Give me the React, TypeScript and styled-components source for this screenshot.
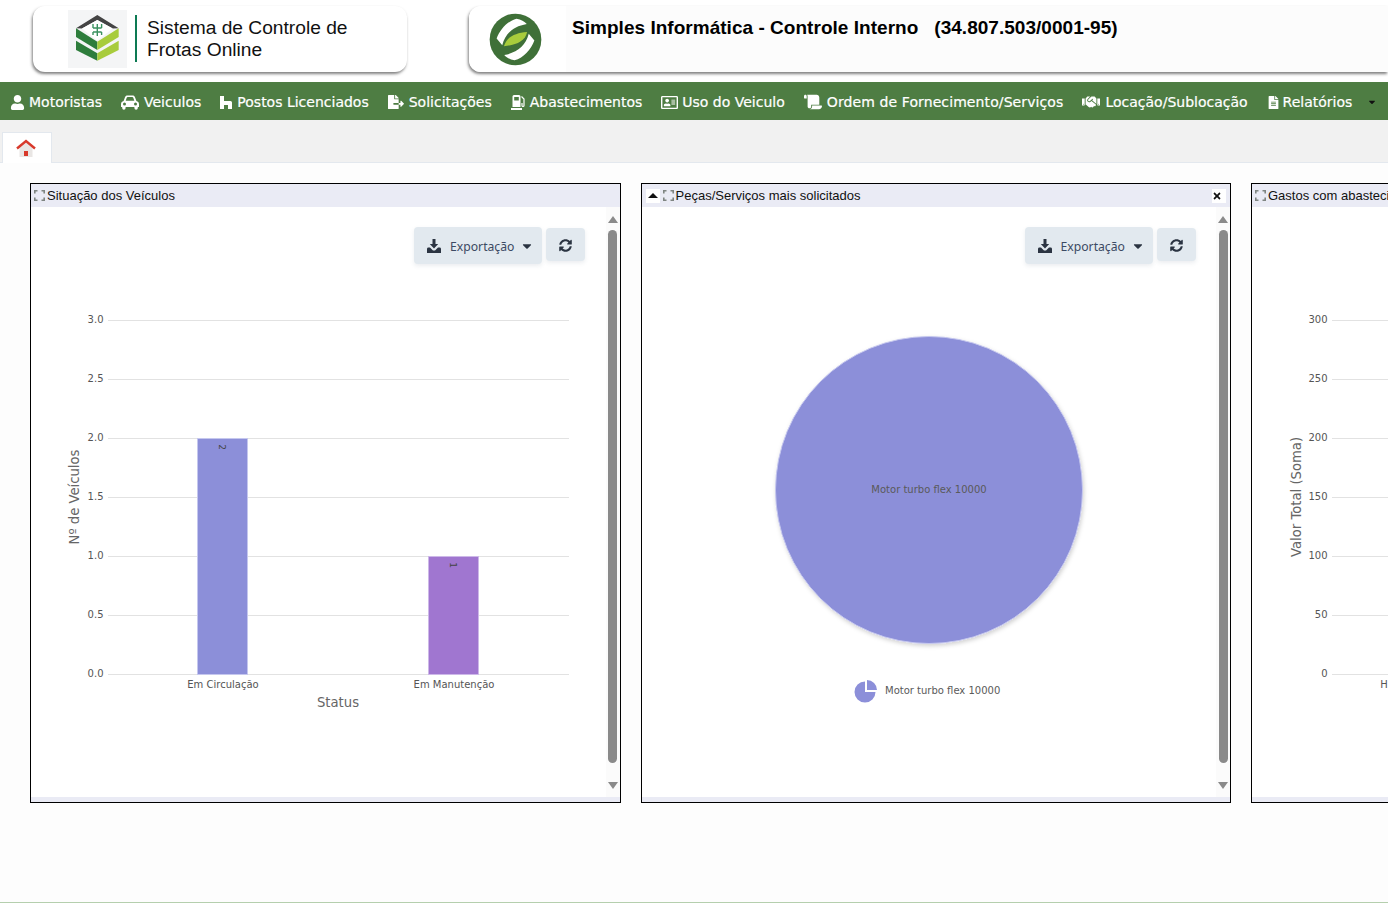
import React from 'react';
import styled, { createGlobalStyle } from 'styled-components';
import {
  FaCaretDown,
  FaFileAlt,
  FaFileExport,
  FaHandshake,
  FaRegAddressCard,
  FaScroll,
  FaSyncAlt,
  FaTimes,
  FaUser,
} from 'react-icons/fa';

const GlobalStyle = createGlobalStyle`
  html, body { margin: 0; padding: 0; background: #fff; }
  body { font-family: "Liberation Sans", Arial, sans-serif; overflow: hidden; }
`;

const Page = styled.div`
  width: 1388px;
  height: 903px;
  overflow: hidden;
  display: flex;
  flex-direction: column;
  background: #fdfdfd;
  border-bottom: 1px solid #b5cfae;
  box-sizing: border-box;
`;

const Header = styled.header`
  height: 82px;
  flex: none;
  display: flex;
  gap: 62px;
  padding: 6px 0 0 33px;
  box-sizing: border-box;
  background: #fff;
`;

const HeaderCard = styled.div<{ $wide?: boolean }>`
  height: 66px;
  flex: ${(p) => (p.$wide ? '1' : 'none')};
  width: ${(p) => (p.$wide ? 'auto' : '374px')};
  border-radius: ${(p) => (p.$wide ? '12px 0 0 12px' : '12px')};
  background: ${(p) => (p.$wide ? '#fcfcfc' : '#fff')};
  box-shadow: -1px 2px 3px rgba(60, 60, 60, 0.65);
  display: flex;
  align-items: flex-start;
  overflow: hidden;
`;

const BrandLogo = styled.svg`
  width: 59px;
  height: 58px;
  margin: 4px 8px 0 35px;
  flex: none;
`;

const Divider = styled.div`
  width: 2px;
  height: 47px;
  margin-top: 9px;
  background: #0d7a53;
  flex: none;
`;

const BrandText = styled.div`
  margin: 11px 0 0 10px;
  font-size: 19.2px;
  line-height: 22px;
  color: #111;
`;

const CompanyLogoBox = styled.div`
  width: 97px;
  height: 66px;
  padding-right: 5px;
  box-sizing: border-box;
  background: #fff;
  flex: none;
  display: flex;
  align-items: center;
  justify-content: center;
`;

const CompanyName = styled.div`
  margin: 10px 0 0 6px;
  font-size: 19px;
  line-height: 24px;
  font-weight: 700;
  letter-spacing: 0.03px;
  color: #000;
  white-space: pre;
`;

const Nav = styled.nav`
  height: 38px;
  flex: none;
  box-sizing: border-box;
  background: #4e7d43;
  display: flex;
  align-items: center;
  gap: 19px;
  padding: 2px 0 0 10px;
  color: #fff;
`;

const NavItem = styled.a<{ $track?: number }>`
  display: flex;
  align-items: center;
  font-family: "DejaVu Sans", Verdana, sans-serif;
  font-size: 14px;
  letter-spacing: ${(p) => p.$track ?? 0}px;
  -webkit-text-stroke: 0.2px #fff;
  white-space: nowrap;
  color: #fff;
`;

const NavIcon = styled.span<{ $slot: number }>`
  width: ${(p) => p.$slot}px;
  flex: none;
  display: flex;
  align-items: center;
  -webkit-text-stroke: 0;
`;

const NavCaret = styled(FaCaretDown)`
  font-size: 10px;
  margin-left: -4px;
  color: #111;
`;

const TabBar = styled.div`
  height: 43px;
  flex: none;
  background: #f1f1f1;
  border-bottom: 1px solid #e3e8ee;
  box-sizing: border-box;
  padding: 12px 0 0 2px;
  display: flex;
`;

const Tab = styled.div`
  width: 50px;
  height: 31px;
  box-sizing: border-box;
  background: #fff;
  border: 1px solid #e3e8ee;
  border-bottom: none;
  display: flex;
  align-items: flex-start;
  justify-content: center;
  padding: 5px 2px 0 0;
`;

const Board = styled.main`
  flex: 1;
  display: flex;
  gap: 20px;
  padding: 20px 0 0 30px;
`;

const Panel = styled.section`
  width: 590.5px;
  height: 620px;
  flex: none;
  box-sizing: border-box;
  border: 1px solid #000;
  background: #fff;
  display: flex;
  flex-direction: column;
`;

const PanelTitle = styled.div`
  height: 23px;
  flex: none;
  background: #eaebf5;
  display: flex;
  align-items: center;
  padding: 0 4px 0 3px;
  font-size: 13px;
  color: #111;
  white-space: nowrap;
  overflow: hidden;
`;

const TitleText = styled.span`
  margin-left: 2px;
  flex: 1;
`;

const TitleButton = styled.span<{ $left?: boolean }>`
  width: 14px;
  height: 14px;
  padding-left: ${(p) => (p.$left ? '2px' : '0')};
  box-sizing: border-box;
  background: #fff;
  display: flex;
  align-items: center;
  justify-content: flex-start;
  margin: ${(p) => (p.$left ? '0 3px 0 1px' : '0')};
  color: #111;
  flex: none;
`;

const UpCaret = styled.span`
  width: 0;
  height: 0;
  border-left: 5px solid transparent;
  border-right: 5px solid transparent;
  border-bottom: 5px solid #111;
`;

const PanelBody = styled.div`
  flex: 1;
  min-height: 0;
  display: flex;
`;

const PanelContent = styled.div`
  flex: 1;
  min-width: 0;
  display: flex;
  flex-direction: column;
`;

const PanelFoot = styled.div`
  height: 5px;
  flex: none;
  background: #eaebf5;
`;

const Toolbar = styled.div`
  height: 37px;
  margin-top: 20px;
  padding-right: 20.5px;
  flex: none;
  display: flex;
  justify-content: flex-end;
  align-items: center;
  gap: 4px;
`;

const ExportButton = styled.button`
  width: 128px;
  height: 37px;
  border: none;
  border-radius: 4px;
  background: #e2e9ef;
  box-shadow: 0 2px 4px rgba(90, 110, 130, 0.12);
  display: flex;
  align-items: center;
  gap: 9px;
  padding: 2px 0 0 13px;
  box-sizing: border-box;
  font-family: "Noto Sans", sans-serif;
  font-size: 12.2px;
  color: #3c4a63;
  svg { margin-top: -1px; }
`;

const ExportCaret = styled(FaCaretDown)`
  margin-left: -3px;
`;

const RefreshButton = styled.button`
  width: 39px;
  height: 33px;
  border: none;
  border-radius: 4px;
  background: #e2e9ef;
  box-shadow: 0 2px 4px rgba(90, 110, 130, 0.12);
  display: flex;
  align-items: center;
  justify-content: center;
  padding: 1px 0 0;
  color: #2b3442;
  margin-top: -2px;
`;

const ScrollTrack = styled.div`
  width: 14px;
  flex: none;
  background: #fbfbfb;
  display: flex;
  flex-direction: column;
  align-items: center;
  padding-top: 9px;
  box-sizing: border-box;
`;

const ScrollArrow = styled.span<{ $down?: boolean }>`
  width: 0;
  height: 0;
  border-left: 5px solid transparent;
  border-right: 5px solid transparent;
  ${(p) => (p.$down ? 'border-top: 7px solid #8a8a8a;' : 'border-bottom: 7px solid #8a8a8a;')}
`;

const ScrollThumb = styled.div`
  width: 9px;
  height: 533px;
  margin: 7px 0 19px;
  border-radius: 5px;
  background: #8a8a8a;
`;

const ChartSvg = styled.svg`
  display: block;
  flex: none;
  font-family: "DejaVu Sans", Verdana, sans-serif;
`;

const TickLabel = styled.text`
  font-size: 10px;
  fill: #555;
`;

const AxisTitle = styled.text`
  font-size: 13.2px;
  fill: #666;
`;

const BarValue = styled.text`
  font-size: 9px;
  fill: #444;
`;

const SliceLabel = styled.text`
  font-size: 10px;
  fill: #5a5a5a;
`;

const BRAND_PURPLE = '#8c8fd9';

function CarIcon() {
  return (
    <svg width="18" height="15" viewBox="0 0 18 15">
      <path
        fill="#fff"
        fillRule="evenodd"
        d="M2.6 6 4 2.2C4.4 1 5.3.5 6.400.5h5.200c1.100 0 2 .5 2.400 1.700L15.400 6c1.500.4 2.600 1.500 2.600 3.200V12h-1.200v1a1.700 1.700 0 0 1-3.400 0v-1H4.600v1a1.700 1.700 0 0 1-3.400 0v-1H0V9.200C0 7.500 1.100 6.400 2.600 6zm2.100-.2h8.600l-1-3c-.2-.5-.6-.7-1-.7H6.700c-.4 0-.8.2-1 .7zM3.500 7.500a1.500 1.500 0 1 0 0 3 1.500 1.500 0 0 0 0-3zm11 0a1.500 1.500 0 1 0 0 3 1.500 1.500 0 0 0 0-3z"
      />
    </svg>
  );
}

function PostIcon() {
  return (
    <svg width="12" height="13" viewBox="0 0 12 13">
      <path fill="#fff" d="M0 0h4v5h6.500A1.500 1.500 0 0 1 12 6.500V13H8V9H4v4H0z" />
    </svg>
  );
}

function PumpIcon() {
  return (
    <svg width="15" height="15" viewBox="0 0 15 15">
      <path
        fill="#fff"
        fillRule="evenodd"
        d="M1.500 1.500A1.500 1.500 0 0 1 3 0h5a1.500 1.500 0 0 1 1.500 1.500V12h-8zM3.200 2v3.500h4.600V2z"
      />
      <rect x="0" y="13" width="11" height="2" fill="#fff" />
      <path fill="none" stroke="#fff" strokeWidth="1.200" d="M10.500 1.500 13 4v6.500a1 1 0 0 1-2 0V8" />
    </svg>
  );
}

function DownloadIcon() {
  return (
    <svg width="14" height="14" viewBox="0 0 14 14">
      <path fill="#2b3442" d="M5.500 0h3v5h2.700L7 9.500 2.800 5h2.700z" />
      <path fill="#2b3442" d="M0 10c0-.8.5-1.500 1.500-1.500H3l3 3h2l3-3h1.500c1 0 1.500.7 1.500 1.500v4H0z" />
    </svg>
  );
}

const menu: { label: string; slot: number; track?: number; icon: React.ReactNode }[] = [
  { label: 'Motoristas', slot: 19, icon: <FaUser size={15} /> },
  { label: 'Veiculos', slot: 23, icon: <CarIcon /> },
  { label: 'Postos Licenciados', slot: 17, icon: <PostIcon /> },
  { label: 'Solicitações', slot: 21, icon: <FaFileExport size={16} /> },
  { label: 'Abastecimentos', slot: 19, icon: <PumpIcon /> },
  { label: 'Uso do Veiculo', slot: 21, icon: <FaRegAddressCard size={17} /> },
  { label: 'Ordem de Fornecimento/Serviços', slot: 23, track: 0.1, icon: <FaScroll size={18} /> },
  { label: 'Locação/Sublocação', slot: 23, icon: <FaHandshake size={18} /> },
  { label: 'Relatórios', slot: 16, icon: <FaFileAlt size={13} /> },
];

function BrandMark() {
  return (
    <BrandLogo viewBox="0 0 59 58">
      <rect width="59" height="58" fill="#f4f5f6" />
      <path fill="#444" d="M8 18.300 29.300 5l21.400 13.300-6 .2-15.400-8.500L14 18.500z" />
      <path fill="#fff" d="M14 18.500 29.300 10l15.400 8.500-15.400 12z" />
      <path fill="#2e7d3c" d="M8 18.300 29.300 31.700V40L8 27z" />
      <path fill="#a8cc3c" d="M50.700 18.300 29.300 31.700V40l21.400-13z" />
      <path fill="#2e7d3c" d="M8 30.700 29.300 43.300v7.400L8 40z" />
      <path fill="#a8cc3c" d="M50.700 30.700 29.300 43.300v7.400L50.700 40z" />
      <path
        fill="none"
        stroke="#3b9160"
        strokeWidth="1.400"
        d="M25 14v4M29.300 14v12M33.600 14v4M25 18h8.600M25 22h8.600M25 22v3M33.600 22v3"
      />
    </BrandLogo>
  );
}

function CompanyMark() {
  return (
    <svg width="53" height="53" viewBox="85 35 160 160">
      <circle cx="165" cy="115" r="78" fill="#3f7038" />
      <path
        fill="#fff"
        d="M108 112C118 85 140 60 168 52 182 54 192 60 199 68 160 75 135 95 125 132Z"
      />
      <path
        fill="#fff"
        d="M222 118C212 145 190 170 162 178 150 176 138 170 131 162 170 155 195 135 205 98Z"
      />
      <path fill="#a8cc3c" d="M130 135C140 105 165 95 200 92 195 120 165 132 130 135Z" />
    </svg>
  );
}

function HomeIcon() {
  return (
    <svg width="20" height="20" viewBox="0 0 20 20">
      <path fill="#e9e6e4" d="M3.500 9.500 10 4l6.500 5.500V19h-13z" />
      <path fill="none" stroke="#d8392b" strokeWidth="2.400" d="M1 10.500 10 3l9 7.500" />
      <rect x="8" y="13" width="4" height="5" fill="#d8392b" />
    </svg>
  );
}

function ExpandIcon() {
  return (
    <svg width="11" height="11" viewBox="0 0 11 11" style={{ flex: 'none' }}>
      <path
        fill="none"
        stroke="#7f8582"
        strokeWidth="1.600"
        d="M.8 3.500V.8H3.500M7.500 .8h2.700V3.500M10.200 7.500v2.700H7.500M3.500 10.200H.8V7.500"
      />
    </svg>
  );
}

function Tools() {
  return (
    <Toolbar>
      <ExportButton>
        <DownloadIcon />
        <span>Exportação</span>
        <ExportCaret size={14} color="#2b3442" />
      </ExportButton>
      <RefreshButton>
        <FaSyncAlt size={13} />
      </RefreshButton>
    </Toolbar>
  );
}

function Scrollbar() {
  return (
    <ScrollTrack>
      <ScrollArrow />
      <ScrollThumb />
      <ScrollArrow $down />
    </ScrollTrack>
  );
}

// grid positions are taken relative to the svg origin (just below the toolbar)
const gridY = [56, 115, 174, 233, 292, 351, 410];

function GridLines({ x1, x2, labels }: { x1: number; x2: number; labels: string[] }) {
  return (
    <>
      {gridY.map((y, i) => (
        <g key={y}>
          <line x1={x1} x2={x2} y1={y + 0.5} y2={y + 0.5} stroke="#e2e2e2" />
          <TickLabel x={x1 - 4.5} y={y + 3} textAnchor="end">
            {labels[i]}
          </TickLabel>
        </g>
      ))}
    </>
  );
}

function StatusChart() {
  return (
    <ChartSvg width="575" height="533" viewBox="0 0 575 533">
      <GridLines x1={77} x2={538} labels={['3.0', '2.5', '2.0', '1.5', '1.0', '0.5', '0.0']} />
      <rect x="166.5" y="174.5" width="50" height="236" fill={BRAND_PURPLE} stroke="#c5c7ee" />
      <rect x="397.5" y="292.5" width="50" height="118" fill="#a076d0" stroke="#cdb8e8" />
      <BarValue transform="translate(188 183) rotate(90)" textAnchor="middle">2</BarValue>
      <BarValue transform="translate(419 301) rotate(90)" textAnchor="middle">1</BarValue>
      <TickLabel x="192" y="424" textAnchor="middle">Em Circulação</TickLabel>
      <TickLabel x="423" y="424" textAnchor="middle">Em Manutenção</TickLabel>
      <AxisTitle x="307" y="443" textAnchor="middle">Status</AxisTitle>
      <AxisTitle transform="translate(48 233) rotate(-90)" textAnchor="middle">Nº de Veículos</AxisTitle>
    </ChartSvg>
  );
}

function PartsChart() {
  return (
    <ChartSvg width="575" height="533" viewBox="0 0 575 533">
      <defs>
        <filter id="pieShadow" x="-10%" y="-10%" width="120%" height="120%">
          <feDropShadow dx="1" dy="2" stdDeviation="2" floodColor="#000" floodOpacity="0.18" />
        </filter>
      </defs>
      <circle cx="287" cy="226" r="153.5" fill={BRAND_PURPLE} stroke="#c5c7ee" filter="url(#pieShadow)" />
      <SliceLabel x="287" y="229" textAnchor="middle">Motor turbo flex 10000</SliceLabel>
      <path d="M223 428V417.500A10.500 10.500 0 1 0 233.500 428Z" fill={BRAND_PURPLE} />
      <path d="M225 426V416A10 10 0 0 1 235 426Z" fill={BRAND_PURPLE} />
      <SliceLabel x="243" y="430">Motor turbo flex 10000</SliceLabel>
    </ChartSvg>
  );
}

function FuelChart() {
  return (
    <ChartSvg width="575" height="533" viewBox="0 0 575 533">
      <GridLines x1={80} x2={538} labels={['300', '250', '200', '150', '100', '50', '0']} />
      <TickLabel x="132" y="424" textAnchor="middle">H</TickLabel>
      <AxisTitle transform="translate(49 233) rotate(-90)" textAnchor="middle">Valor Total (Soma)</AxisTitle>
    </ChartSvg>
  );
}

export default function App() {
  return (
    <>
      <GlobalStyle />
      <Page>
        <Header>
          <HeaderCard>
            <BrandMark />
            <Divider />
            <BrandText>
              Sistema de Controle de
              <br />
              Frotas Online
            </BrandText>
          </HeaderCard>
          <HeaderCard $wide>
            <CompanyLogoBox>
              <CompanyMark />
            </CompanyLogoBox>
            <CompanyName>{'Simples Informática - Controle Interno   (34.807.503/0001-95)'}</CompanyName>
          </HeaderCard>
        </Header>
        <Nav>
          {menu.map((m) => (
            <NavItem key={m.label} $track={m.track}>
              <NavIcon $slot={m.slot}>{m.icon}</NavIcon>
              {m.label}
            </NavItem>
          ))}
          <NavCaret />
        </Nav>
        <TabBar>
          <Tab>
            <HomeIcon />
          </Tab>
        </TabBar>
        <Board>
          <Panel>
            <PanelTitle>
              <ExpandIcon />
              <TitleText>Situação dos Veículos</TitleText>
            </PanelTitle>
            <PanelBody>
              <PanelContent>
                <Tools />
                <StatusChart />
              </PanelContent>
              <Scrollbar />
            </PanelBody>
            <PanelFoot />
          </Panel>
          <Panel>
            <PanelTitle>
              <TitleButton $left>
                <UpCaret />
              </TitleButton>
              <ExpandIcon />
              <TitleText>Peças/Serviços mais solicitados</TitleText>
              <TitleButton>
                <FaTimes size={10} />
              </TitleButton>
            </PanelTitle>
            <PanelBody>
              <PanelContent>
                <Tools />
                <PartsChart />
              </PanelContent>
              <Scrollbar />
            </PanelBody>
            <PanelFoot />
          </Panel>
          <Panel>
            <PanelTitle>
              <ExpandIcon />
              <TitleText>Gastos com abastecimento</TitleText>
            </PanelTitle>
            <PanelBody>
              <PanelContent>
                <Tools />
                <FuelChart />
              </PanelContent>
              <Scrollbar />
            </PanelBody>
            <PanelFoot />
          </Panel>
        </Board>
      </Page>
    </>
  );
}
